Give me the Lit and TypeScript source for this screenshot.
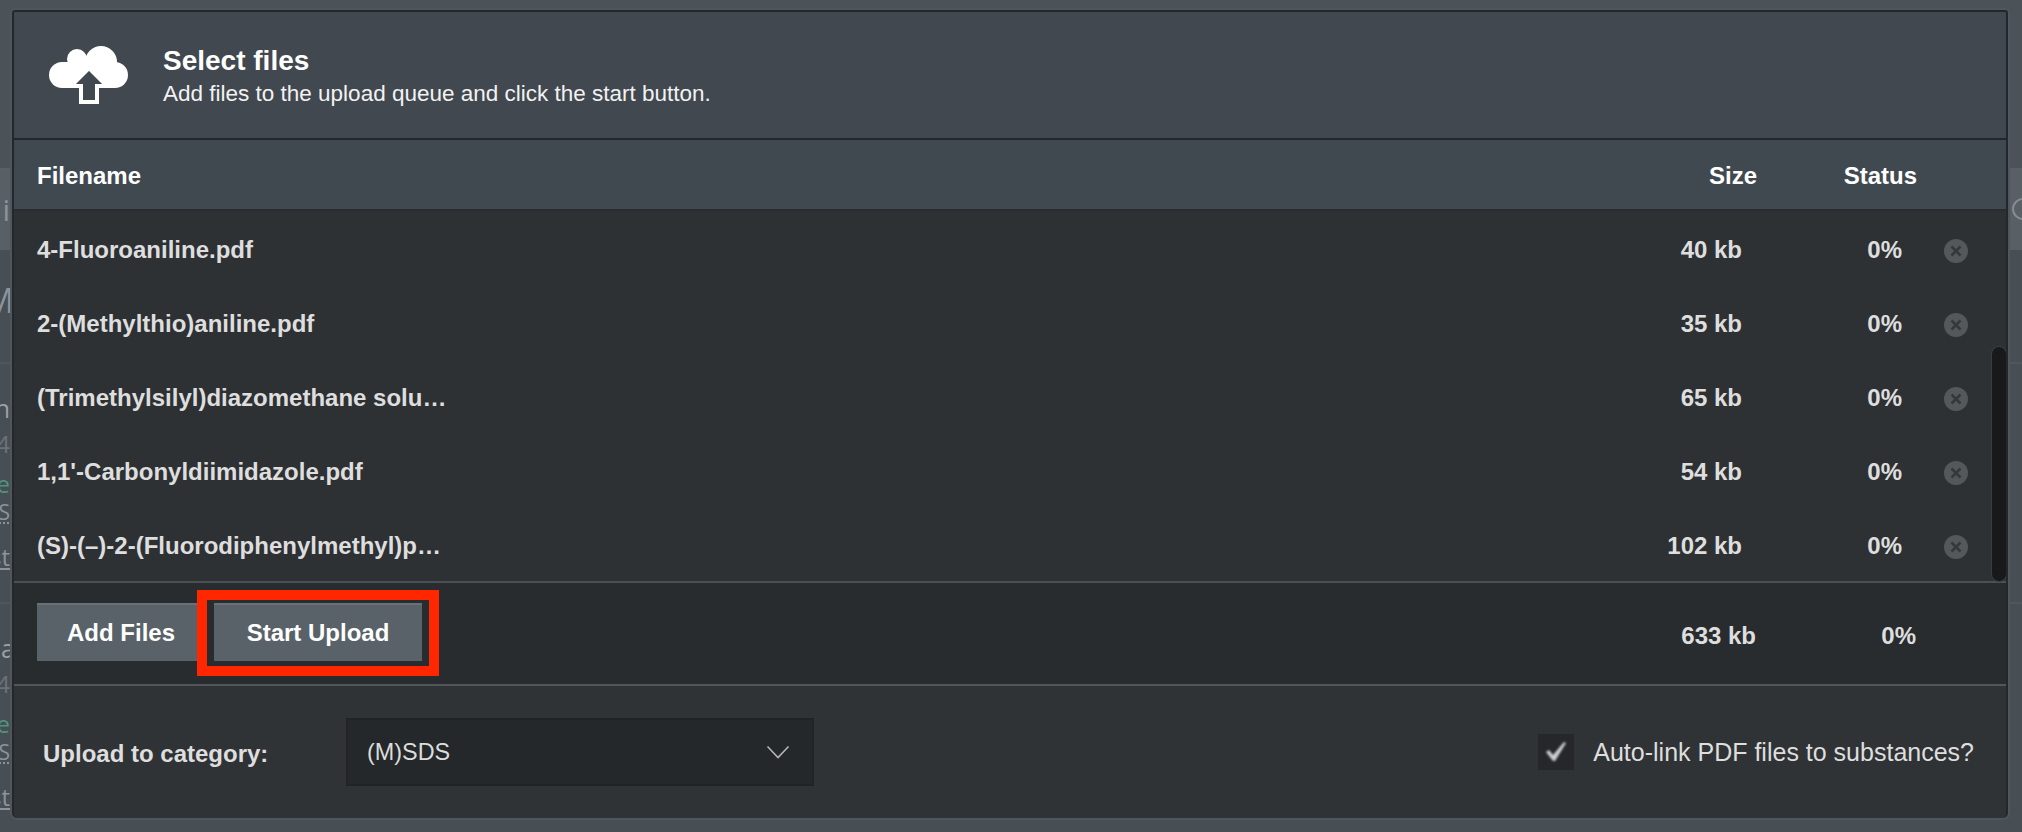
import { LitElement, html, css } from "lit";
import { customElement } from "lit/decorators.js";

const FILES = [
  { name: "4-Fluoroaniline.pdf", size: "40 kb" },
  { name: "2-(Methylthio)aniline.pdf", size: "35 kb" },
  { name: "(Trimethylsilyl)diazomethane solu…", size: "65 kb" },
  { name: "1,1'-Carbonyldiimidazole.pdf", size: "54 kb" },
  { name: "(S)-(–)-2-(Fluorodiphenylmethyl)p…", size: "102 kb" },
];

@customElement("app-root")
export class AppRoot extends LitElement {
  static styles = css`
    :host {
      display: block;
      position: relative;
      width: 2022px;
      height: 832px;
      overflow: hidden;
      background: #474e55;
      font-family: "Liberation Sans", Arial, sans-serif;
    }
    .page { display: flex; flex-direction: column; height: 832px; }
    .band { display: flex; justify-content: space-between; overflow: hidden; flex: none; box-sizing: border-box; }
    .band-top { height: 170px; background: #4b5359; border-bottom: 2px solid #596066; }
    .band-tab { height: 80px; background: #586066; }
    .band-head { height: 114px; background: #474e54; border-bottom: 2px solid #50575c; }
    .band-item { height: 240px; background: #474e54; border-bottom: 2px solid #50575c; }
    .band-last { height: 228px; background: #474e54; }
    .clip {
      width: 10px;
      flex: none;
      overflow: hidden;
      display: flex;
      flex-direction: column;
      align-items: flex-end;
      white-space: nowrap;
      font-family: "Open Sans", sans-serif;
      color: #8d9499;
    }
    .t-i { font-size: 30px; line-height: 80px; }
    .t-m { font-size: 34px; line-height: 100px; margin-right: -4px; }
    .l { display: block; }
    .l-title { margin-top: 22px; height: 44px; line-height: 44px; font-size: 25px; color: #9ba1a5; }
    .l-title.cut { margin-right: -5px; }
    .l-num { height: 28px; line-height: 28px; font-size: 24px; color: #6c7378; }
    .l-green { margin-top: 6px; height: 40px; line-height: 40px; font-size: 24px; color: #4f9480; }
    .l-sds { height: 16px; line-height: 16px; font-size: 21px; color: #8d9499; text-decoration: underline dotted; }
    .l-link { margin-top: 22px; height: 30px; line-height: 30px; font-size: 24px; color: #8d9499; text-decoration: underline; }
    .ring {
      width: 18px;
      height: 18px;
      margin: 28px -12px 0 0;
      border: 2px solid #868d92;
      border-radius: 50%;
      flex: none;
    }

    .modal {
      position: absolute;
      left: 12px;
      top: 10px;
      width: 1996px;
      height: 808px;
      box-sizing: border-box;
      display: flex;
      flex-direction: column;
      border-radius: 3px 3px 5px 5px;
      overflow: hidden;
      border: solid #24282c;
      border-width: 2px 2px 0 2px;
      box-shadow: 0 0 0 2px #50575c;
      background: #303336;
    }
    .header {
      height: 128px;
      flex: none;
      box-sizing: border-box;
      background: #41484f;
      border-bottom: 2px solid #23272b;
      display: flex;
      align-items: center;
      padding: 0 0 0 35px;
    }
    .cloud { width: 80px; height: 60px; flex: none; filter: blur(0.6px); margin-top: 2px; }
    .titles { margin-left: 34px; display: flex; flex-direction: column; margin-top: 4px; }
    .title { font-size: 28px; font-weight: 700; color: #fff; line-height: 34px; }
    .sub { font-size: 22.5px; color: #f2f2f2; line-height: 32px; }

    .thead {
      height: 71px;
      flex: none;
      box-sizing: border-box;
      background: #414950;
      border-bottom: 2px solid #292c30;
      display: flex;
      align-items: center;
      padding: 3px 89px 0 23px;
      font-size: 24px;
      font-weight: 700;
      color: #fff;
    }
    .fname { flex: 1; min-width: 0; white-space: nowrap; }
    .c-size { width: 140px; text-align: right; flex: none; }
    .c-stat { width: 160px; text-align: right; flex: none; }

    .list { height: 372px; flex: none; box-sizing: border-box; background: #2e3134; position: relative; border-bottom: 2px solid #4c5054; }
    .row {
      height: 74px;
      box-sizing: border-box;
      display: flex;
      align-items: center;
      padding: 4px 38px 0 23px;
      font-size: 24px;
      font-weight: 700;
      color: #dedede;
    }
    .x { width: 24px; height: 24px; margin-left: 42px; flex: none; margin-top: 1px; }
    .scroll {
      position: absolute;
      right: 0;
      bottom: 0;
      width: 14px;
      height: 234px;
      border-radius: 7px;
      background: #18191a;
      box-shadow: 0 0 0 1px #3a3d40;
    }

    .bar {
      height: 103px;
      flex: none;
      box-sizing: border-box;
      background: #292c2f;
      border-bottom: 2px solid #53575b;
      display: flex;
      align-items: center;
      padding: 0 90px 3px 23px;
      font-size: 24px;
      font-weight: 700;
      color: #dedede;
    }
    .btns { flex: 1; display: flex; gap: 9px; }
    .btn {
      box-sizing: border-box;
      height: 58px;
      background: #586268;
      border-top: 2px solid #677177;
      display: flex;
      align-items: center;
      justify-content: center;
      color: #fff;
      font-size: 24px;
      font-weight: 700;
    }
    .add { width: 168px; }
    .start { width: 208px; position: relative; }
    .mark {
      position: absolute;
      left: -17px;
      right: -17px;
      top: -15px;
      bottom: -15px;
      border: 10px solid #ff2600;
      pointer-events: none;
    }
    .bar .c-size { margin-top: 7px; }
    .bar .c-stat { margin-top: 7px; }

    .foot {
      flex: 1;
      display: flex;
      align-items: center;
      padding: 0 32px 0 29px;
      background: #303336;
      color: #dedede;
    }
    .cat { font-size: 24px; font-weight: 700; width: 303px; flex: none; margin-top: 4px; }
    .select {
      box-sizing: border-box;
      width: 468px;
      height: 68px;
      background: #25282a;
      border: 2px solid #212326;
      display: flex;
      align-items: center;
      justify-content: space-between;
      padding: 0 22px 0 19px;
      font-size: 23.4px;
      color: #dcdcdc;
    }
    .chev { width: 24px; height: 14px; flex: none; }
    .auto { margin-left: auto; display: flex; align-items: center; gap: 19px; font-size: 25px; }
    .check {
      width: 36px;
      height: 36px;
      background: #25272a;
      display: flex;
      align-items: center;
      justify-content: center;
    }
    .check svg { width: 20px; height: 20px; filter: blur(0.8px); }
  `;

  private leftItem(title: string, cut = false) {
    return html`<div class="clip">
      <span class="l l-title ${cut ? "cut" : ""}">${title}</span>
      <span class="l l-num">4</span>
      <span class="l l-green">e</span>
      <span class="l l-sds">S</span>
      <span class="l l-link">st</span>
    </div>`;
  }

  render() {
    return html`
      <div class="page">
        <div class="band band-top"></div>
        <div class="band band-tab">
          <div class="clip"><span class="t-i">i</span></div>
          <div class="ring"></div>
        </div>
        <div class="band band-head"><div class="clip"><span class="t-m">M</span></div></div>
        <div class="band band-item">${this.leftItem("n")}</div>
        <div class="band band-last">${this.leftItem("la", true)}</div>
      </div>

      <div class="modal">
        <div class="header">
          <svg class="cloud" viewBox="0 0 80 60" aria-hidden="true">
            <g fill="#fff">
              <circle cx="13" cy="29" r="13"></circle>
              <circle cx="28" cy="13" r="10"></circle>
              <circle cx="52" cy="16" r="16"></circle>
              <circle cx="66" cy="29" r="13"></circle>
              <rect x="13" y="16" width="53" height="26"></rect>
            </g>
            <polygon points="40,22 58,40 48,40 48,56 32,56 32,40 22,40" fill="#41484f" stroke="#fff" stroke-width="4"></polygon>
          </svg>
          <div class="titles">
            <div class="title">Select files</div>
            <div class="sub">Add files to the upload queue and click the start button.</div>
          </div>
        </div>

        <div class="thead">
          <div class="fname">Filename</div>
          <div class="c-size">Size</div>
          <div class="c-stat">Status</div>
        </div>

        <div class="list">
          ${FILES.map(
            (f) => html`<div class="row">
              <div class="fname">${f.name}</div>
              <div class="c-size">${f.size}</div>
              <div class="c-stat">0%</div>
              <svg class="x" viewBox="0 0 24 24" aria-hidden="true">
                <circle cx="12" cy="12" r="12" fill="#55585a"></circle>
                <path d="M7.5 7.5l9 9M16.5 7.5l-9 9" stroke="#35383a" stroke-width="2.6" fill="none"></path>
              </svg>
            </div>`
          )}
          <div class="scroll"></div>
        </div>

        <div class="bar">
          <div class="btns">
            <div class="btn add">Add Files</div>
            <div class="btn start">Start Upload<div class="mark"></div></div>
          </div>
          <div class="c-size">633 kb</div>
          <div class="c-stat">0%</div>
        </div>

        <div class="foot">
          <div class="cat">Upload to category:</div>
          <div class="select">
            <span>(M)SDS</span>
            <svg class="chev" viewBox="0 0 24 14" aria-hidden="true">
              <path d="M1.5 1.5L12 12.5 22.5 1.5" fill="none" stroke="#b4b4b4" stroke-width="1.6"></path>
            </svg>
          </div>
          <div class="auto">
            <div class="check">
              <svg viewBox="0 0 20 20" aria-hidden="true">
                <polygon points="0,10 3,8 7,13 18,0 20,1 9,19 7,19" fill="#cfcfcf"></polygon>
              </svg>
            </div>
            <span>Auto-link PDF files to substances?</span>
          </div>
        </div>
      </div>
    `;
  }
}
